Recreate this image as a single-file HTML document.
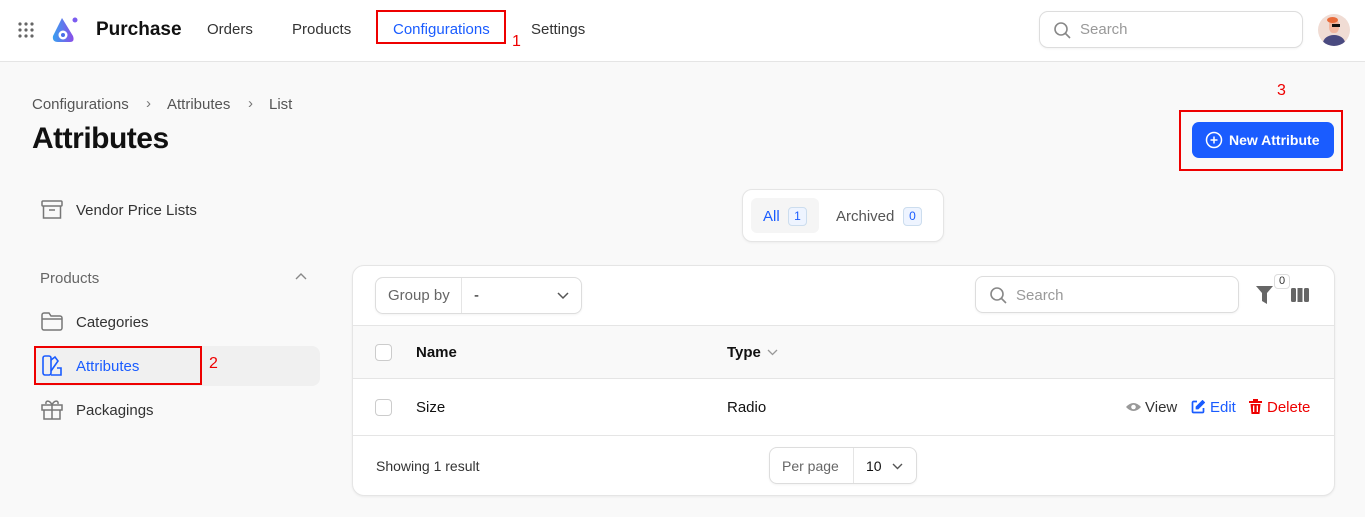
<!DOCTYPE html>
<html><head><meta charset="utf-8"><style>
*{box-sizing:border-box;margin:0;padding:0}
body{width:1365px;height:517px;overflow:hidden;background:#f9f9f9;font-family:"Liberation Sans",sans-serif;color:#111;position:relative;font-size:14px}
.a{position:absolute}
.hdr{left:0;top:0;width:1365px;height:62px;background:#fff;border-bottom:1px solid #e5e5e5}
.nav{top:21px;font-size:15px;color:#333}
.red{border:2px solid #e00;position:absolute}
.rn{color:#e00;font-size:16px;position:absolute}
.side{font-size:15px;color:#333}
.card{left:352px;top:265px;width:983px;height:231px;background:#fff;border:1px solid #e5e5e5;border-radius:12px;box-shadow:0 1px 2px rgba(0,0,0,.06)}
.cb{width:17px;height:17px;border:1px solid #ccc;border-radius:4px;background:#fff}
.box{border:1px solid #ddd;border-radius:8px;background:#fff;box-shadow:0 1px 2px rgba(0,0,0,.05)}
</style></head><body>
<div class="a hdr"></div>
<svg class="a" style="left:18px;top:22px" width="16" height="16" viewBox="0 0 16 16" fill="#666"><circle cx="2" cy="2" r="1.6"/><circle cx="8" cy="2" r="1.6"/><circle cx="14" cy="2" r="1.6"/><circle cx="2" cy="8" r="1.6"/><circle cx="8" cy="8" r="1.6"/><circle cx="14" cy="8" r="1.6"/><circle cx="2" cy="14" r="1.6"/><circle cx="8" cy="14" r="1.6"/><circle cx="14" cy="14" r="1.6"/></svg>
<svg class="a" style="left:50px;top:16px" width="30" height="28" viewBox="0 0 30 28"><defs><linearGradient id="g" x1="0" x2="1"><stop offset="0" stop-color="#38a0f0"/><stop offset="1" stop-color="#8a4ee8"/></linearGradient></defs><path d="M12 2 L3 20 Q2 26 8 26 L20 26 Q25 26 23 20 Z" fill="url(#g)"/><circle cx="13" cy="19" r="4.5" fill="#fff"/><circle cx="13" cy="19" r="2" fill="#4a6de8"/><circle cx="25" cy="4" r="2.5" fill="#7b5cf0"/></svg>
<div class="a" style="left:96px;top:19px;font-size:19px;font-weight:bold">Purchase</div>
<div class="a nav" style="left:207px">Orders</div>
<div class="a nav" style="left:292px">Products</div>
<div class="a nav" style="left:393px;color:#1a5cff">Configurations</div>
<div class="red" style="left:376px;top:10px;width:130px;height:34px"></div>
<div class="rn" style="left:512px;top:33px">1</div>
<div class="a nav" style="left:531px">Settings</div>
<div class="a box" style="left:1039px;top:11px;width:264px;height:37px;border-radius:9px"></div>
<svg class="a" style="left:1053px;top:21px" width="18" height="18" viewBox="0 0 18 18" fill="none" stroke="#888" stroke-width="1.6"><circle cx="8" cy="8" r="6"/><path d="M12.5 12.5 L17 17"/></svg>
<div class="a" style="left:1080px;top:21px;font-size:15px;color:#999">Search</div>
<div class="a" style="left:1318px;top:14px;width:32px;height:32px;border-radius:50%;background:#f0dcd4;overflow:hidden"><div class="a" style="left:5px;top:21px;width:22px;height:16px;border-radius:50%;background:#4a4a80"></div><div class="a" style="left:11px;top:5px;width:10px;height:14px;border-radius:40%;background:#f2b7a0"></div><div class="a" style="left:9px;top:3px;width:11px;height:6px;border-radius:50%;background:#e86b3a"></div><div class="a" style="left:14px;top:10px;width:8px;height:3px;background:#111"></div></div>

<div class="a" style="left:32px;top:96px;font-size:15px;color:#555">Configurations</div>
<div class="a" style="left:146px;top:95px;font-size:15px;color:#777">›</div>
<div class="a" style="left:167px;top:96px;font-size:15px;color:#555">Attributes</div>
<div class="a" style="left:248px;top:95px;font-size:15px;color:#777">›</div>
<div class="a" style="left:269px;top:96px;font-size:15px;color:#555">List</div>
<div class="a" style="left:32px;top:122px;font-size:30px;font-weight:bold;letter-spacing:-0.5px">Attributes</div>

<div class="rn" style="left:1277px;top:82px">3</div>
<div class="red" style="left:1179px;top:110px;width:164px;height:61px"></div>
<div class="a" style="left:1192px;top:122px;width:142px;height:36px;background:#1a5cff;border-radius:7px;color:#fff;font-size:14px;font-weight:bold;padding:10px 0 0 37px;white-space:nowrap">New Attribute</div>
<svg class="a" style="left:1205px;top:131px" width="18" height="18" viewBox="0 0 18 18" fill="none" stroke="#fff" stroke-width="1.5"><circle cx="9" cy="9" r="7.5"/><path d="M9 5.5v7M5.5 9h7"/></svg>

<svg class="a" style="left:41px;top:200px" width="22" height="20" viewBox="0 0 22 20" fill="none" stroke="#777" stroke-width="1.5"><rect x="1" y="1" width="20" height="5" rx="1"/><path d="M2.5 6v12h17V6M8 10h6"/></svg>
<div class="a side" style="left:76px;top:202px">Vendor Price Lists</div>
<div class="a" style="left:40px;top:270px;font-size:15px;color:#666">Products</div>
<svg class="a" style="left:295px;top:272px" width="12" height="8" viewBox="0 0 12 8" fill="none" stroke="#888" stroke-width="1.4"><path d="M1 7l5-5 5 5"/></svg>
<svg class="a" style="left:41px;top:312px" width="22" height="19" viewBox="0 0 22 19" fill="none" stroke="#777" stroke-width="1.5"><path d="M1 3a2 2 0 012-2h5l2 3h9a2 2 0 012 2v10a2 2 0 01-2 2H3a2 2 0 01-2-2z M1 7h20"/></svg>
<div class="a side" style="left:76px;top:314px">Categories</div>
<div class="a" style="left:34px;top:346px;width:286px;height:40px;background:#f0f0f0;border-radius:8px"></div>
<div class="red" style="left:34px;top:346px;width:168px;height:39px"></div>
<div class="rn" style="left:209px;top:355px">2</div>
<svg class="a" style="left:42px;top:355px" width="21" height="21" viewBox="0 0 21 21" fill="none" stroke="#1a5cff" stroke-width="1.6"><rect x="1" y="1" width="8" height="19" rx="2"/><path d="M9 5l4-3 3 4-7 10M9 20h10v-7h-4"/></svg>
<div class="a side" style="left:76px;top:358px;color:#1a5cff">Attributes</div>
<svg class="a" style="left:41px;top:399px" width="22" height="21" viewBox="0 0 22 21" fill="none" stroke="#777" stroke-width="1.5"><rect x="1" y="6" width="20" height="5"/><path d="M3 11v9h16v-9M11 6v14M11 6c-2-5-7-5-6-1M11 6c2-5 7-5 6-1"/></svg>
<div class="a side" style="left:76px;top:402px">Packagings</div>

<div class="a box" style="left:742px;top:189px;width:202px;height:53px;border-radius:10px;border-color:#e5e5e5"></div>
<div class="a" style="left:751px;top:198px;width:68px;height:35px;background:#f5f5f5;border-radius:6px"></div>
<div class="a" style="left:763px;top:208px;font-size:15px;color:#1a5cff">All</div>
<div class="a" style="left:788px;top:207px;width:19px;height:19px;border:1px solid #cde;background:#eef4ff;border-radius:4px;font-size:12px;color:#1a5cff;text-align:center;line-height:17px">1</div>
<div class="a" style="left:836px;top:208px;font-size:15px;color:#555">Archived</div>
<div class="a" style="left:903px;top:207px;width:19px;height:19px;border:1px solid #cde;background:#eef4ff;border-radius:4px;font-size:12px;color:#1a5cff;text-align:center;line-height:17px">0</div>

<div class="a card"></div>
<div class="a box" style="left:375px;top:277px;width:207px;height:37px"></div>
<div class="a" style="left:461px;top:278px;width:1px;height:35px;background:#e5e5e5"></div>
<div class="a" style="left:388px;top:287px;font-size:15px;color:#666">Group by</div>
<div class="a" style="left:474px;top:287px;font-size:15px">-</div>
<svg class="a" style="left:557px;top:292px" width="12" height="8" viewBox="0 0 12 8" fill="none" stroke="#555" stroke-width="1.5"><path d="M1 1l5 5 5-5"/></svg>
<div class="a box" style="left:975px;top:276px;width:264px;height:37px"></div>
<svg class="a" style="left:989px;top:286px" width="18" height="18" viewBox="0 0 18 18" fill="none" stroke="#888" stroke-width="1.6"><circle cx="8" cy="8" r="6"/><path d="M12.5 12.5 L17 17"/></svg>
<div class="a" style="left:1016px;top:287px;font-size:15px;color:#999">Search</div>
<svg class="a" style="left:1256px;top:286px" width="17" height="18" viewBox="0 0 17 18" fill="#666"><path d="M0 0h17l-6 7v11l-5-3V7z"/></svg>
<div class="a" style="left:1274px;top:274px;width:16px;height:15px;border:1px solid #ddd;border-radius:4px;background:#fff;font-size:11px;text-align:center;line-height:13px;color:#333">0</div>
<svg class="a" style="left:1291px;top:288px" width="18" height="14" viewBox="0 0 18 14" fill="#666"><rect x="0" y="0" width="5" height="14" rx="1.5"/><rect x="6.5" y="0" width="5" height="14"/><rect x="13" y="0" width="5" height="14" rx="1.5"/></svg>

<div class="a" style="left:353px;top:325px;width:981px;height:54px;background:#f9f9f9;border-top:1px solid #e5e5e5;border-bottom:1px solid #e5e5e5"></div>
<div class="a cb" style="left:375px;top:344px"></div>
<div class="a" style="left:416px;top:344px;font-size:15px;font-weight:bold">Name</div>
<div class="a" style="left:727px;top:344px;font-size:15px;font-weight:bold">Type</div>
<svg class="a" style="left:767px;top:349px" width="11" height="7" viewBox="0 0 11 7" fill="none" stroke="#999" stroke-width="1.3"><path d="M1 1l4.5 4.5L10 1"/></svg>
<div class="a cb" style="left:375px;top:399px"></div>
<div class="a" style="left:416px;top:399px;font-size:15px">Size</div>
<div class="a" style="left:727px;top:399px;font-size:15px">Radio</div>
<svg class="a" style="left:1126px;top:402px" width="15" height="10" viewBox="0 0 15 10"><path d="M0 5Q7.5-3 15 5Q7.5 13 0 5z" fill="#999"/><circle cx="7.5" cy="5" r="2.3" fill="#fff"/></svg>
<div class="a" style="left:1145px;top:399px;font-size:15px;color:#333">View</div>
<svg class="a" style="left:1191px;top:400px" width="14" height="14" viewBox="0 0 14 14" fill="none" stroke="#1a5cff" stroke-width="1.7"><path d="M6 1.5H2.5a1 1 0 00-1 1v9a1 1 0 001 1h9a1 1 0 001-1V8"/><path d="M11.5 1l1.5 1.5L7 8.5H5.5V7z" fill="#1a5cff"/></svg>
<div class="a" style="left:1210px;top:399px;font-size:15px;color:#1a5cff">Edit</div>
<svg class="a" style="left:1249px;top:399px" width="13" height="15" viewBox="0 0 13 15" fill="#e00"><rect x="0" y="2" width="13" height="2"/><rect x="4" y="0" width="5" height="2"/><path d="M1.5 5h10l-1 10h-8z"/><rect x="4" y="6.5" width="1.3" height="6.5" fill="#fff"/><rect x="7.7" y="6.5" width="1.3" height="6.5" fill="#fff"/></svg>
<div class="a" style="left:1267px;top:399px;font-size:15px;color:#e00">Delete</div>
<div class="a" style="left:353px;top:435px;width:981px;height:1px;background:#e5e5e5"></div>
<div class="a" style="left:376px;top:458px;font-size:14px;color:#333">Showing 1 result</div>
<div class="a box" style="left:769px;top:447px;width:148px;height:37px"></div>
<div class="a" style="left:853px;top:448px;width:1px;height:35px;background:#e5e5e5"></div>
<div class="a" style="left:782px;top:458px;font-size:14px;color:#666">Per page</div>
<div class="a" style="left:866px;top:458px;font-size:14px">10</div>
<svg class="a" style="left:892px;top:463px" width="11" height="7" viewBox="0 0 11 7" fill="none" stroke="#555" stroke-width="1.4"><path d="M1 1l4.5 4.5L10 1"/></svg>
</body></html>
